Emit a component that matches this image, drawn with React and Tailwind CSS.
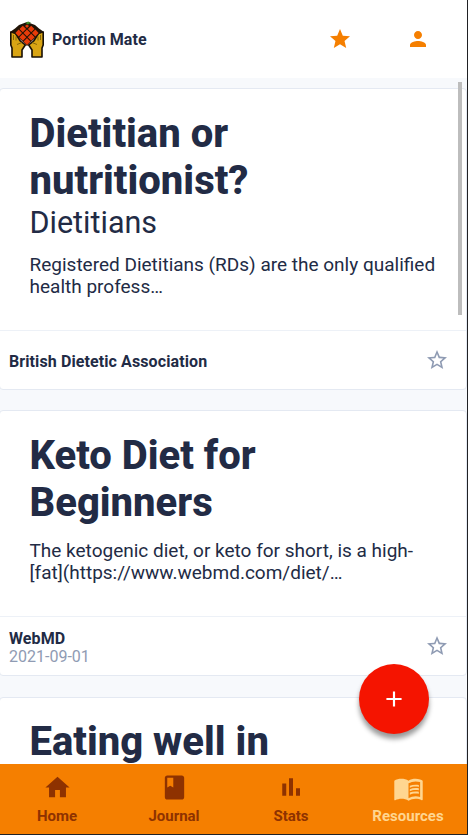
import { MdStar, MdStarBorder, MdPerson, MdHome, MdBook, MdMenuBook, MdAdd } from "react-icons/md";

function Logo() {
  return (
    <svg viewBox="0 0 36 37" className="h-[37px] w-9 shrink-0">
      <path d="m1.800 11 4.500 1 5 8 5 4-3.300 5v7H3v-9l-1.200-3Z" fill="#d9a514" stroke="#181006" strokeWidth="1.600" strokeLinejoin="round" />
      <path d="m34.200 11-4.500 1-5 8-5 4 3.300 5v7H33v-9l1.200-3Z" fill="#d9a514" stroke="#181006" strokeWidth="1.600" strokeLinejoin="round" />
      <path d="m1 11 5-3.500L10 4l4-1.500L18 1l4 1.500L26 4l4 3.500 5 3.500-5 2-12 12L6 13Z" fill="#201306" />
      <path d="m18 17 3.500 3.500L18 24l-3.500-3.500ZM13.800 12.800l3.500 3.500-3.500 3.500-3.500-3.500ZM22.200 12.800l3.500 3.500-3.500 3.500-3.500-3.500ZM9.600 8.600l3.500 3.500-3.500 3.500-3.200-3.500ZM18 8.600l3.500 3.500-3.500 3.500-3.500-3.500ZM26.400 8.600l3.200 3.500-3.200 3.500-3.500-3.500ZM13.800 4.800l3.300 3.200-3.300 3.300L10.500 8ZM22.200 4.800 25.500 8l-3.300 3.300L18.900 8ZM18 3.500l2 1.500-2 2-2-2Z" fill="#e83c09" />
      <path d="m16.500 2 2.500-1.500 3 1-3 2Z" fill="#3d8b2c" />
      <path d="M4.500 14v5M7 15.500v4m1 4 5-2M31.500 14v5M29 15.500v4m-1 4-5-2" fill="none" stroke="#705507" strokeWidth=".8" />
    </svg>
  );
}

function BarsIcon({ size }) {
  return (
    <svg width={size} height={size} viewBox="0 0 24 24" fill="currentColor">
      <path d="M5 9.200h3.200V19H5zM10.400 5h3.200v14h-3.200zM16 13h3.200v6H16z" />
    </svg>
  );
}

function Card({ title, category, text, source, date }) {
  return (
    <article className="rounded-[4px] border border-[#e4e9f2] bg-white">
      <div className="pt-[20.500px] pr-5 pb-8 pl-[29.500px]">
        <h2 className="text-[40px] leading-[47.500px] font-extrabold">
          {title[0]}<br />{title[1]}
        </h2>
        {category && <p className="text-[30.500px] leading-9">{category}</p>}
        <p className="mt-[13.500px] text-[19px] leading-[22px] whitespace-nowrap">
          {text[0]}<br />{text[1]}
        </p>
      </div>
      <footer className="flex h-[59px] items-center justify-between border-t border-[#edf1f7] pr-[17px] pl-[9px]">
        <div className="pt-[3px] text-[16px] leading-[19px] tracking-[0.100px]">
          <p className="font-bold">{source}</p>
          {date && <p className="text-[16px] leading-[18px] tracking-normal text-[#8f9bb3]">{date}</p>}
        </div>
        <MdStarBorder size={24} className="text-[#8f9bb3]" />
      </footer>
    </article>
  );
}

const cards = [
  {
    title: ["Dietitian or", "nutritionist?"],
    category: "Dietitians",
    text: ["Registered Dietitians (RDs) are the only qualified", "health profess…"],
    source: "British Dietetic Association",
  },
  {
    title: ["Keto Diet for", "Beginners"],
    text: ["The ketogenic diet, or keto for short, is a high-", "[fat](https://www.webmd.com/diet/…"],
    source: "WebMD",
    date: "2021-09-01",
  },
  { title: ["Eating well in", ""], text: ["", ""], source: "" },
];

const tabs = [
  { label: "Home", Icon: MdHome, size: 29 },
  { label: "Journal", Icon: MdBook, size: 29 },
  { label: "Stats", Icon: BarsIcon, size: 30 },
  { label: "Resources", Icon: MdMenuBook, size: 31, active: true },
];

export default function App() {
  return (
    <div className="relative flex h-[835px] w-[468px] flex-col overflow-hidden border-r border-b border-[#202124] bg-[#f7f9fc] font-[Roboto,sans-serif] text-[#222b45]">
      <header className="flex h-[78px] shrink-0 items-center bg-white pr-[37px] pl-[9px]">
        <Logo />
        <h1 className="ml-[7px] flex-1 pt-0.5 text-[16px] tracking-[0.080px] font-bold">Portion Mate</h1>
        <MdStar size={24} className="mr-[54px] text-[#f57f00]" />
        <MdPerson size={24} className="text-[#f57f00]" />
      </header>
      <main className="-ml-px flex min-h-0 flex-1 flex-col gap-[20.070px] overflow-hidden pt-[10.400px]">
        {cards.map((card) => <div key={card.title[0]} className="shrink-0"><Card {...card} /></div>)}
      </main>
      <nav className="-ml-[1.500px] grid h-[70px] w-[469px] shrink-0 grid-cols-[repeat(4,117px)] bg-[#f57f00]">
        {tabs.map(({ label, Icon, size, active }) => (
          <div key={label} className={active ? "flex flex-col items-center text-[#ffd690]" : "flex flex-col items-center text-[#8e3200]"}>
            <div className={active ? "mt-[8px] flex h-8 items-center" : "mt-[7px] flex h-8 items-center"}><Icon size={size} /></div>
            <span className={active ? "mt-[2px] text-[15px] leading-5 font-bold" : "mt-[3px] text-[15px] leading-5 font-bold"}>{label}</span>
          </div>
        ))}
      </nav>
      <div className="absolute top-[82px] right-[5px] h-[233px] w-1 bg-[#bdbdbd]" />
      <button className="absolute top-[664px] left-[359px] flex size-[70px] items-center justify-center rounded-full bg-[#f51400] text-white shadow-[0_5px_5px_rgba(0,0,0,0.4)]">
        <MdAdd size={26} />
      </button>
    </div>
  );
}
